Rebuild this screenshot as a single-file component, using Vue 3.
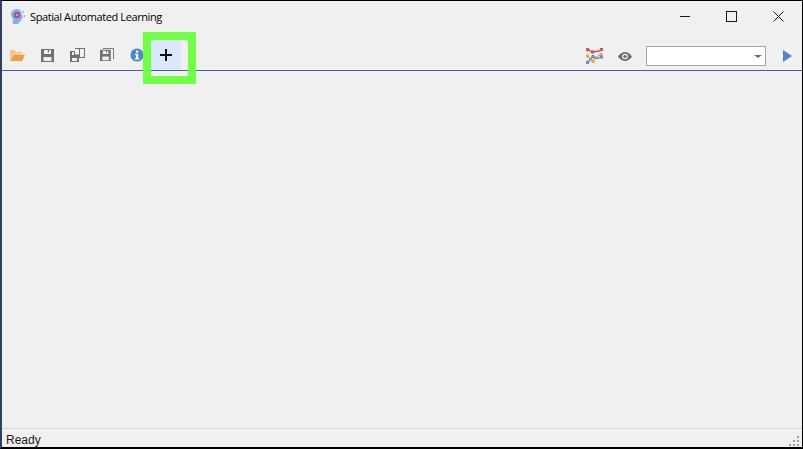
<template>
  <div class="window">
    <header class="titlebar">
      <svg class="app-icon" width="16" height="17" viewBox="0 0 16 17">
        <path d="M7 1C3.500 1 1 3.300 1 6.500c0 1.800.8 3 1.800 4V16h6v-2.500h2.200l.6-3 1.400-.5-1-3C11.500 3 10 1 7 1z" fill="#7db4e6" />
        <circle cx="7" cy="7" r="3.200" fill="#c2407e" />
        <circle cx="7" cy="7" r="1.300" fill="#8fb8e0" />
        <circle cx="13" cy="4" r="1" fill="#b9a8c8" />
        <circle cx="14.500" cy="8" r="1" fill="#b9a8c8" />
      </svg>
      <span class="title">Spatial Automated Learning</span>
      <div class="win-buttons">
        <button class="win-btn">
          <svg width="10" height="11" viewBox="0 0 10 11"><path d="M0 5.500h10" stroke="#1a1a1a" fill="none" /></svg>
        </button>
        <button class="win-btn">
          <svg width="11" height="11" viewBox="0 0 11 11"><rect x=".5" y=".5" width="10" height="10" stroke="#1a1a1a" fill="none" /></svg>
        </button>
        <button class="win-btn">
          <svg width="11" height="11" viewBox="0 0 11 11"><path d="M.5.500l10 10M10.500.500l-10 10" stroke="#1a1a1a" fill="none" /></svg>
        </button>
      </div>
    </header>

    <div class="toolbar">
      <div class="tool">
        <svg width="15" height="13" viewBox="0 0 16 14">
          <path d="M0 1h5l1.500 2H13v2H3.500L0 11z" fill="#f6c48e" />
          <path d="M3.500 6H16l-3 7H0z" fill="#f29d3f" />
        </svg>
      </div>
      <div class="tool">
        <svg width="13" height="13" viewBox="0 0 13 13">
          <path fill-rule="evenodd" d="M0 0h13v13H0zM3 1v4h7V1H8v2.500H6.800V1zM2.500 8v4h8V8z" fill="#6f6f74" />
        </svg>
      </div>
      <div class="tool">
        <svg width="16" height="15" viewBox="0 0 16 15">
          <path fill-rule="evenodd" d="M1 3h5v3.500h4V14H1zM3 4v3h2V4zM3 10v3h5v-3z" fill="#6f6f74" />
          <rect x="10.500" y="0.500" width="5" height="9" fill="#f0f0f0" stroke="#6f6f74" />
          <path d="M6 .5h4.500" stroke="#6f6f74" fill="none" />
        </svg>
      </div>
      <div class="tool">
        <svg width="14" height="14" viewBox="0 0 15 15">
          <path fill-rule="evenodd" d="M0 2h11.500v12H0zM3 3v3.500h6V3H7.500v2h-1V3zM2.500 9v4h7V9z" fill="#6f6f74" />
          <path d="M3 .5h11.500V12" fill="none" stroke="#6f6f74" />
        </svg>
      </div>
      <div class="tool">
        <svg width="14" height="14" viewBox="0 0 16 16">
          <circle cx="8" cy="8" r="7.500" fill="#4f8ac8" />
          <rect x="6.800" y="3" width="2.600" height="2.400" fill="#fff" />
          <path d="M5.800 6.600h3.600v5h1.200v1.400H5.600v-1.400h1.200V8H5.800z" fill="#fff" />
        </svg>
      </div>
      <div class="tool active">
        <svg width="12" height="12" viewBox="0 0 12 12">
          <path d="M6 0v12M0 6h12" stroke="#111" stroke-width="2" fill="none" />
        </svg>
      </div>

      <div class="right-tools">
        <svg class="chart-icon" width="17" height="16" viewBox="0 0 17 16" fill="none" stroke-width="1.300">
          <path d="M1.500 1.500l5 2.500 7-1 2-1.500" stroke="#dc3c50" />
          <circle cx="1.500" cy="1.500" r="1.100" fill="#f4b8c0" stroke="#dc3c50" />
          <circle cx="6.500" cy="4" r="1.100" fill="#f4b8c0" stroke="#dc3c50" />
          <circle cx="15.500" cy="1.500" r="1.100" fill="#f4b8c0" stroke="#dc3c50" />
          <path d="M1.500 8l5 5.500 3-4 5.500-3" stroke="#f39a3c" />
          <circle cx="1.500" cy="8" r="1.100" fill="#fbd9b0" stroke="#f39a3c" />
          <circle cx="7" cy="13.500" r="1.100" fill="#fbd9b0" stroke="#f39a3c" />
          <circle cx="15" cy="6.500" r="1.100" fill="#fbd9b0" stroke="#f39a3c" />
          <path d="M1.500 14.500L7 8.500l4 2 4.500-1.500" stroke="#4a90d0" />
          <circle cx="1.500" cy="14.500" r="1.100" fill="#b8d6f0" stroke="#4a90d0" />
          <circle cx="7" cy="8.500" r="1.100" fill="#b8d6f0" stroke="#4a90d0" />
          <circle cx="15.500" cy="9" r="1.100" fill="#b8d6f0" stroke="#4a90d0" />
        </svg>
        <svg class="eye-icon" width="14" height="9" viewBox="0 0 14 10" preserveAspectRatio="none">
          <path fill-rule="evenodd" d="M0 5c2-3.300 4.300-5 7-5s5 1.700 7 5c-2 3.300-4.300 5-7 5S2 8.300 0 5zm7-3a3 3 0 1 0 0 6 3 3 0 0 0 0-6z" fill="#6f6f74" />
          <circle cx="7" cy="5" r="1.800" fill="#6f6f74" />
        </svg>
        <div class="combo">
          <span class="caret"></span>
        </div>
        <svg class="play-icon" width="9" height="12" viewBox="0 0 9 12">
          <path d="M0 0l9 6-9 6z" fill="#4a86c8" />
        </svg>
      </div>
    </div>

    <main class="content"></main>

    <footer class="statusbar">
      <span>Ready</span>
      <div class="grip">
        <i v-for="d in gripDots" :key="d" :class="'dot d' + d"></i>
      </div>
    </footer>

    <div class="highlight"></div>
  </div>
</template>

<script setup>
const gripDots = [1, 2, 3, 4, 5, 6]
</script>

<style>
html,
body {
  margin: 0;
  background: #f0f0f0;
}
</style>

<style scoped>
.window {
  position: relative;
  width: 803px;
  height: 449px;
  box-sizing: border-box;
  display: flex;
  flex-direction: column;
  background: #f0f0f0;
  border-top: 1px solid #000;
  border-right: 1px solid #000;
  border-bottom: 2px solid #000;
  border-left: 2px solid #2f3f66;
  font-family: "Liberation Sans", Arial, sans-serif;
  color: #1a1a1a;
  overflow: hidden;
}

.titlebar {
  height: 31px;
  display: flex;
  align-items: center;
  padding-left: 8px;
  flex-shrink: 0;
}

.app-icon {
  margin-right: 4px;
}

.title {
  font-family: "Open Sans", "Liberation Sans", sans-serif;
  font-size: 11px;
  letter-spacing: -0.4px;
  margin-top: -1px;
  color: #000;
}

.win-buttons {
  margin-left: auto;
  display: flex;
}

.win-btn {
  width: 47px;
  height: 31px;
  border: 0;
  padding: 0;
  background: none;
  display: flex;
  align-items: center;
  justify-content: center;
}

.toolbar {
  height: 39px;
  box-sizing: border-box;
  display: flex;
  align-items: flex-end;
  border-bottom: 1px solid #3f66a0;
  flex-shrink: 0;
}

.tool {
  width: 30px;
  height: 30px;
  display: flex;
  align-items: center;
  justify-content: center;
}

.tool.active {
  background: #dbe7fa;
  margin-left: -1px;
}

.right-tools {
  margin-left: auto;
  height: 30px;
  box-sizing: border-box;
  padding-top: 2px;
  display: flex;
  align-items: center;
}

.chart-icon {
  margin-right: 15px;
}

.eye-icon {
  margin-right: 14px;
}

.combo {
  position: relative;
  width: 118px;
  height: 18px;
  background: #fff;
  border: 1px solid #a6a6a6;
  margin-right: 17px;
}

.caret {
  position: absolute;
  right: 3px;
  top: 8px;
  width: 0;
  height: 0;
  border-left: 4px solid transparent;
  border-right: 4px solid transparent;
  border-top: 3px solid #6a6a6a;
}

.play-icon {
  margin-right: 10px;
}

.content {
  flex: 1;
}

.statusbar {
  position: relative;
  height: 18px;
  flex-shrink: 0;
  border-top: 1px solid #d9d9d9;
  font-size: 12px;
  line-height: 22px;
  padding-left: 4px;
}

.grip {
  position: absolute;
  right: 3px;
  bottom: 1px;
  width: 10px;
  height: 10px;
}

.dot {
  position: absolute;
  width: 2px;
  height: 2px;
  background: #a0a0a0;
}

.d1 { right: 0; top: 0; }
.d2 { right: 0; top: 4px; }
.d3 { right: 4px; top: 4px; }
.d4 { right: 0; top: 8px; }
.d5 { right: 4px; top: 8px; }
.d6 { right: 8px; top: 8px; }

.highlight {
  position: absolute;
  left: 141px;
  top: 31px;
  width: 53px;
  height: 52px;
  box-sizing: border-box;
  border: 8px solid #70ff45;
}
</style>
